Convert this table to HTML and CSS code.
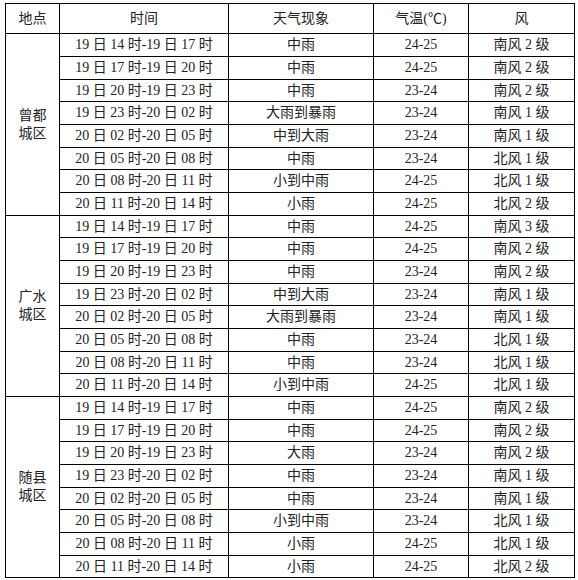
FILE: index.html
```html
<!DOCTYPE html>
<html lang="zh-CN">
<head>
<meta charset="utf-8">
<title>天气预报</title>
<link rel="stylesheet" href="styles.css">
</head>
<body>
<table class="forecast">
  <colgroup>
    <col class="c-place"><col class="c-time"><col class="c-wx"><col class="c-temp"><col class="c-wind">
  </colgroup>
  <thead>
    <tr><th>地点</th><th>时间</th><th>天气现象</th><th>气温(℃)</th><th>风</th></tr>
  </thead>
  <tbody>
    <tr><td class="place" rowspan="8">曾都<br>城区</td><td>19 日 14 时-19 日 17 时</td><td>中雨</td><td>24-25</td><td>南风 2 级</td></tr>
    <tr><td>19 日 17 时-19 日 20 时</td><td>中雨</td><td>24-25</td><td>南风 2 级</td></tr>
    <tr><td>19 日 20 时-19 日 23 时</td><td>中雨</td><td>23-24</td><td>南风 2 级</td></tr>
    <tr><td>19 日 23 时-20 日 02 时</td><td>大雨到暴雨</td><td>23-24</td><td>南风 1 级</td></tr>
    <tr><td>20 日 02 时-20 日 05 时</td><td>中到大雨</td><td>23-24</td><td>南风 1 级</td></tr>
    <tr><td>20 日 05 时-20 日 08 时</td><td>中雨</td><td>23-24</td><td>北风 1 级</td></tr>
    <tr><td>20 日 08 时-20 日 11 时</td><td>小到中雨</td><td>24-25</td><td>北风 1 级</td></tr>
    <tr><td>20 日 11 时-20 日 14 时</td><td>小雨</td><td>24-25</td><td>北风 2 级</td></tr>

    <tr><td class="place" rowspan="8">广水<br>城区</td><td>19 日 14 时-19 日 17 时</td><td>中雨</td><td>24-25</td><td>南风 3 级</td></tr>
    <tr><td>19 日 17 时-19 日 20 时</td><td>中雨</td><td>24-25</td><td>南风 2 级</td></tr>
    <tr><td>19 日 20 时-19 日 23 时</td><td>中雨</td><td>23-24</td><td>南风 2 级</td></tr>
    <tr><td>19 日 23 时-20 日 02 时</td><td>中到大雨</td><td>23-24</td><td>南风 1 级</td></tr>
    <tr><td>20 日 02 时-20 日 05 时</td><td>大雨到暴雨</td><td>23-24</td><td>南风 1 级</td></tr>
    <tr><td>20 日 05 时-20 日 08 时</td><td>中雨</td><td>23-24</td><td>北风 1 级</td></tr>
    <tr><td>20 日 08 时-20 日 11 时</td><td>中雨</td><td>23-24</td><td>北风 1 级</td></tr>
    <tr><td>20 日 11 时-20 日 14 时</td><td>小到中雨</td><td>24-25</td><td>北风 1 级</td></tr>

    <tr><td class="place" rowspan="8">随县<br>城区</td><td>19 日 14 时-19 日 17 时</td><td>中雨</td><td>24-25</td><td>南风 2 级</td></tr>
    <tr><td>19 日 17 时-19 日 20 时</td><td>中雨</td><td>24-25</td><td>南风 2 级</td></tr>
    <tr><td>19 日 20 时-19 日 23 时</td><td>大雨</td><td>23-24</td><td>南风 2 级</td></tr>
    <tr><td>19 日 23 时-20 日 02 时</td><td>中雨</td><td>23-24</td><td>南风 1 级</td></tr>
    <tr><td>20 日 02 时-20 日 05 时</td><td>中雨</td><td>23-24</td><td>南风 1 级</td></tr>
    <tr><td>20 日 05 时-20 日 08 时</td><td>小到中雨</td><td>23-24</td><td>北风 1 级</td></tr>
    <tr><td>20 日 08 时-20 日 11 时</td><td>小雨</td><td>24-25</td><td>北风 1 级</td></tr>
    <tr><td>20 日 11 时-20 日 14 时</td><td>小雨</td><td>24-25</td><td>北风 2 级</td></tr>
  </tbody>
</table>
</body>
</html>
```

FILE: styles.css
```css
html, body {
  margin: 0;
  padding: 0;
  background: #ffffff;
}

body {
  padding: 3px 0 0 5px;
  font-family: "Liberation Serif", "Noto Sans CJK SC", serif;
  font-size: 14px;
  color: #222222;
}

.forecast {
  border-collapse: collapse;
  table-layout: fixed;
  width: 569px;
  border: 1px solid #000;
}

.c-place { width: 54px; }
.c-time { width: 169px; }
.c-wx { width: 145px; }
.c-temp { width: 95px; }
.c-wind { width: 106px; }

.forecast th,
.forecast td {
  border: 1px solid #000;
  padding: 0;
  text-align: center;
  vertical-align: middle;
  font-weight: normal;
  line-height: 16px;
  white-space: nowrap;
  overflow: hidden;
}

.forecast th {
  height: 29px;
  font-size: 14px;
}

.forecast tbody td {
  height: 22px;
}

.forecast tbody tr:nth-child(3n) td {
  height: 21px;
}

.forecast tbody td.place {
  height: auto;
  white-space: normal;
  line-height: 18px;
}
```
